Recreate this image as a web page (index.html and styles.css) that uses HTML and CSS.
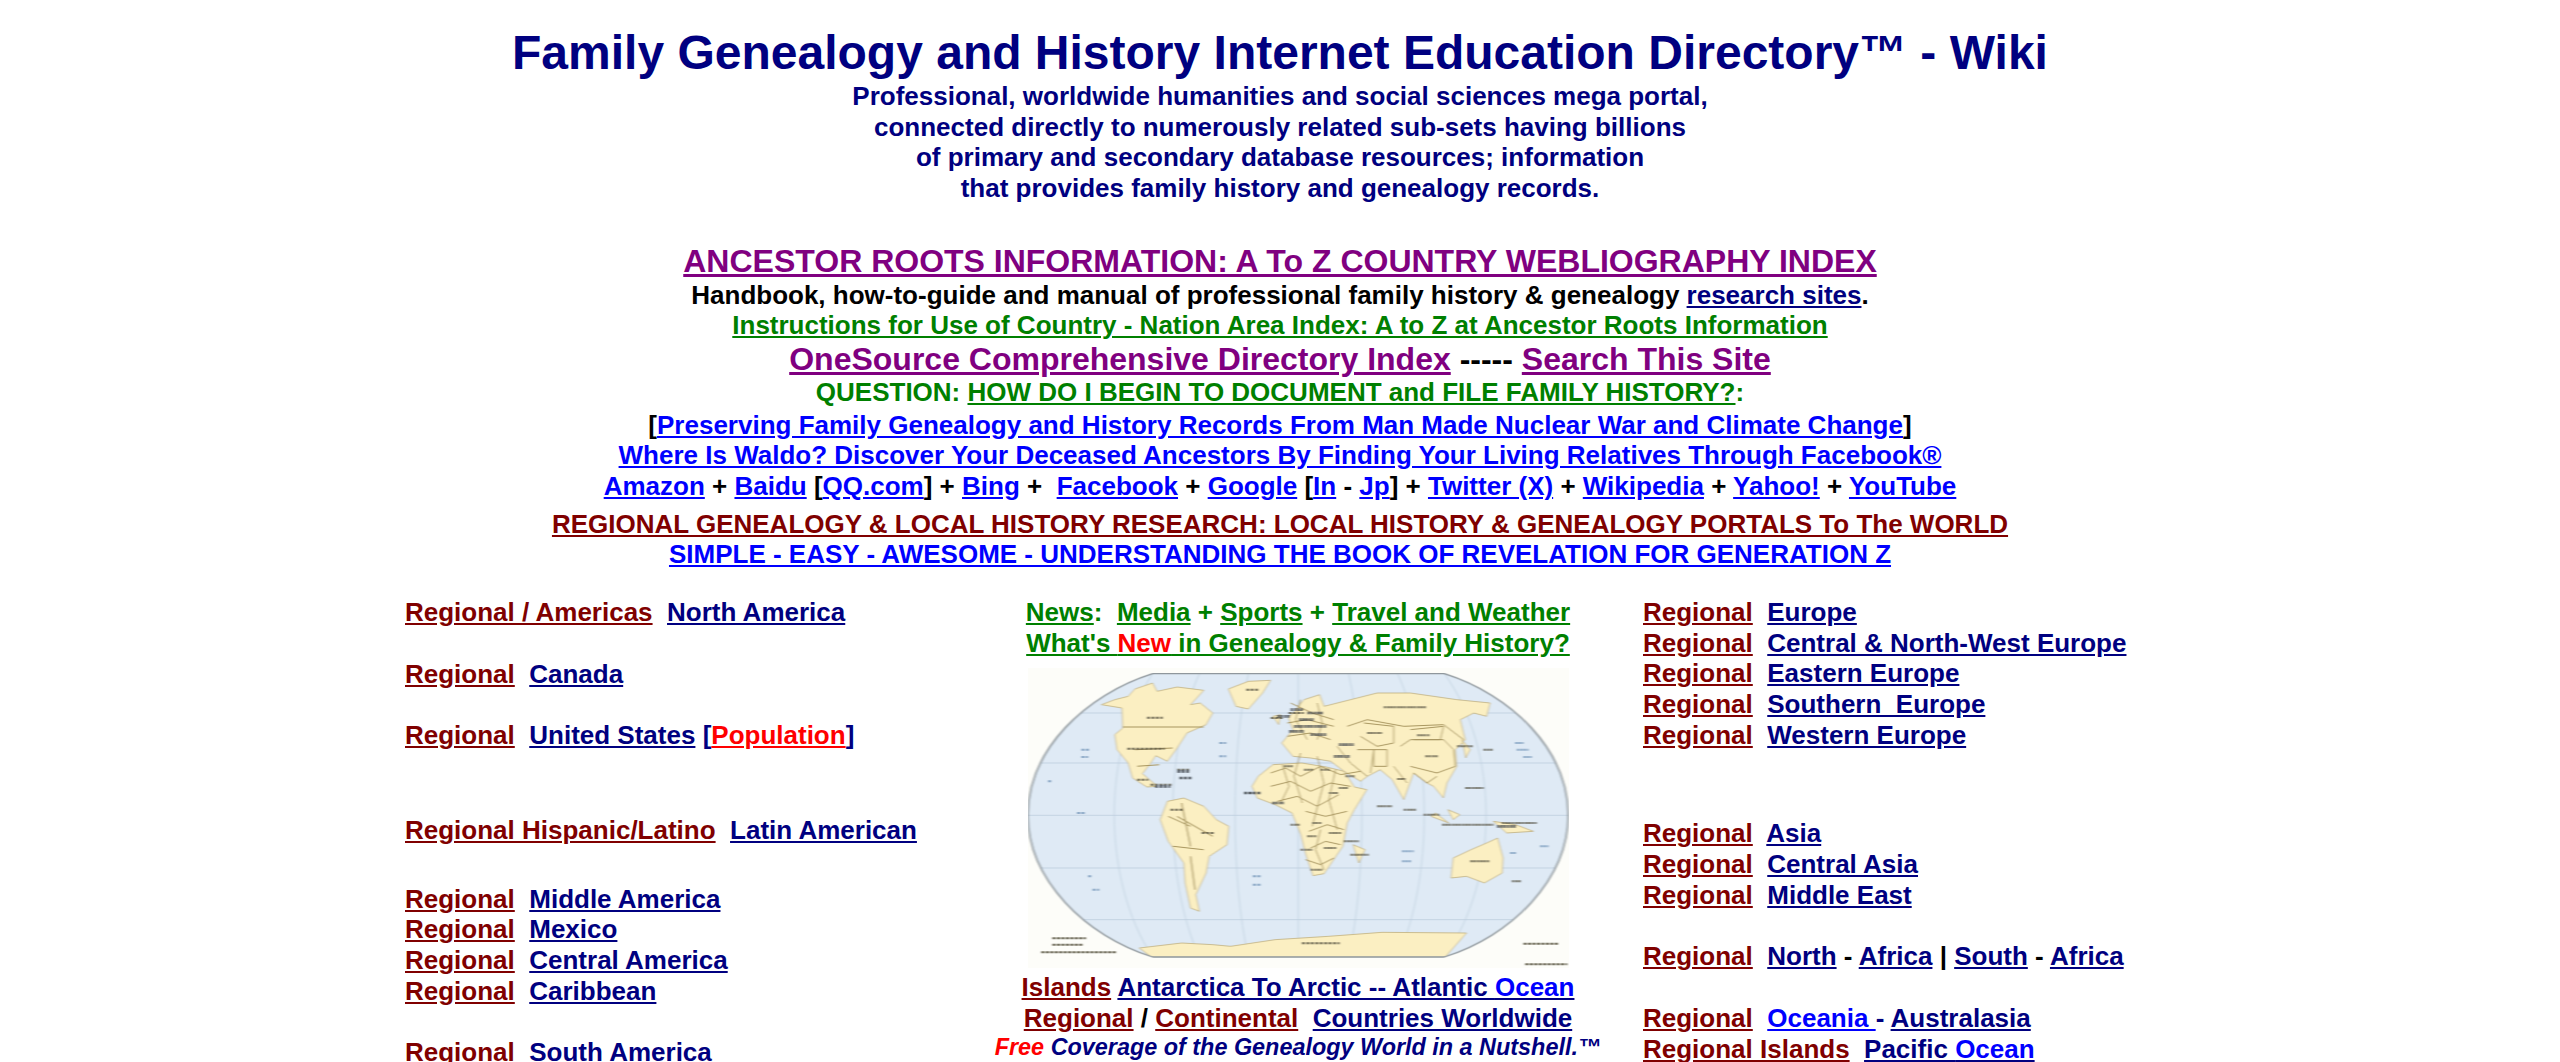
FILE: index.html
```html
<!DOCTYPE html>
<html lang="en">
<head>
  <meta charset="UTF-8">
  <title>Family Genealogy and History Internet Education Directory</title>
  <link rel="stylesheet" href="styles.css">
</head>
<body>
  <header class="intro">
    <h1>Family Genealogy and History Internet Education Directory&trade; - Wiki</h1>
    <p class="navy">Professional, worldwide humanities and social sciences mega portal,<br>
      connected directly to numerously related sub-sets having billions<br>
      of primary and secondary database resources; information<br>
      that provides family history and genealogy records.</p>
  </header>

  <section class="links">
    <h2><a class="purple" href="#">ANCESTOR ROOTS INFORMATION: A To Z COUNTRY WEBLIOGRAPHY INDEX</a></h2>
    <p>Handbook, how-to-guide and manual of professional family history &amp; genealogy <a class="navy" href="#">research sites</a>.</p>
    <p><a class="green" href="#">Instructions for Use of Country - Nation Area Index: A to Z at Ancestor Roots Information</a></p>
    <p class="big"><a class="purple" href="#">OneSource Comprehensive Directory Index</a> ----- <a class="purple" href="#">Search This Site</a></p>
    <p class="green question">QUESTION: <a class="green" href="#">HOW DO I BEGIN TO DOCUMENT and FILE FAMILY HISTORY?</a>:</p>
    <p>[<a class="blue" href="#">Preserving Family Genealogy and History Records From Man Made Nuclear War and Climate Change</a>]</p>
    <p><a class="blue" href="#">Where Is Waldo? Discover Your Deceased Ancestors By Finding Your Living Relatives Through Facebook&reg;</a></p>
    <p><a class="blue" href="#">Amazon</a> + <a class="blue" href="#">Baidu</a> [<a class="blue" href="#">QQ.com</a>] + <a class="blue" href="#">Bing</a> +&nbsp; <a class="blue" href="#">Facebook</a> + <a class="blue" href="#">Google</a> [<a class="blue" href="#">In</a> - <a class="blue" href="#">Jp</a>] + <a class="blue" href="#">Twitter (X)</a> + <a class="blue" href="#">Wikipedia</a> + <a class="blue" href="#">Yahoo!</a> + <a class="blue" href="#">YouTube</a></p>
    <p class="spaced"><a class="maroon" href="#">REGIONAL GENEALOGY &amp; LOCAL HISTORY RESEARCH: LOCAL HISTORY &amp; GENEALOGY PORTALS To The WORLD</a></p>
    <p><a class="blue" href="#">SIMPLE - EASY - AWESOME - UNDERSTANDING THE BOOK OF REVELATION FOR GENERATION Z</a></p>
  </section>

  <main class="regions">
    <div class="col">
      <div class="group"><a class="maroon" href="#">Regional / Americas</a>&nbsp; <a class="navy" href="#">North America</a></div>
      <div class="group"><a class="maroon" href="#">Regional</a>&nbsp; <a class="navy" href="#">Canada</a></div>
      <div class="group"><a class="maroon" href="#">Regional</a>&nbsp; <a class="navy" href="#">United States</a> <span class="navy">[</span><a class="red" href="#">Population</a><span class="navy">]</span></div>
      <div class="group wide"><a class="maroon" href="#">Regional Hispanic/Latino</a>&nbsp; <a class="navy" href="#">Latin American</a></div>
      <div class="group mid">
        <a class="maroon" href="#">Regional</a>&nbsp; <a class="navy" href="#">Middle America</a><br>
        <a class="maroon" href="#">Regional</a>&nbsp; <a class="navy" href="#">Mexico</a><br>
        <a class="maroon" href="#">Regional</a>&nbsp; <a class="navy" href="#">Central America</a><br>
        <a class="maroon" href="#">Regional</a>&nbsp; <a class="navy" href="#">Caribbean</a>
      </div>
      <div class="group"><a class="maroon" href="#">Regional</a>&nbsp; <a class="navy" href="#">South America</a></div>
    </div>

    <div class="col center">
      <div class="green"><a class="green" href="#">News</a>:&nbsp; <a class="green" href="#">Media</a> + <a class="green" href="#">Sports</a> + <a class="green" href="#">Travel and Weather</a></div>
      <div><a class="green" href="#">What's <span class="red">New</span> in Genealogy &amp; Family History?</a></div>

      <svg class="map" viewBox="105 55 1215 900" preserveAspectRatio="none" aria-label="World map">
        <defs>
          <filter id="soft"><feGaussianBlur stdDeviation="2.8 1.8"/></filter>
          <clipPath id="globe"><path d="M385 72L1040 72C1190 135 1318 300 1318 497C1318 690 1190 860 1040 922L385 922C235 860 105 690 105 497C105 300 235 135 385 72Z"/></clipPath>
        </defs>
        <rect x="105" y="55" width="1215" height="900" fill="#fdfdf9"/>
        <g filter="url(#soft)">
          <path d="M385 72L1040 72C1190 135 1318 300 1318 497C1318 690 1190 860 1040 922L385 922C235 860 105 690 105 497C105 300 235 135 385 72Z" fill="#dfeaf5"/>
          <g clip-path="url(#globe)">
            <g class="grid-lines">
              <path d="M105 340H1318M105 497H1318M105 655H1318M105 810H1318M105 190H1318"/>
              <path d="M712 72V922M600 72C560 300 560 690 600 922M825 72C865 300 865 690 825 922M490 72C410 300 410 690 490 922M935 72C1015 300 1015 690 935 922M385 72C270 300 270 690 385 922M1040 72C1165 300 1165 690 1040 922"/>
            </g>
            <g class="land">
              <!-- north america -->
              <path d="M270 165L300 150L330 140L345 118L385 100L395 125L440 112L500 122L470 165L492 160L520 190L505 225L462 250L440 295L418 335L392 318L378 345L362 372L396 410L372 412L340 385L330 340L305 300L300 255L318 235L316 175Z"/>
              <!-- greenland -->
              <path d="M555 118L600 95L650 92L632 130L600 178L572 170Z"/>
              <!-- south america -->
              <path d="M418 455L455 445L500 470L528 510L556 530L552 585L512 620L505 670L482 735L490 785L470 775L458 700L455 640L420 575L402 510Z"/>
              <!-- africa -->
              <path d="M622 380L655 345L720 340L775 352L815 365L838 412L866 420L838 480L822 520L812 590L770 672L745 678L728 610L718 555L698 490L660 465L620 445L608 410Z"/>
              <!-- eurasia -->
              <path d="M690 205L725 150L760 135L770 170L889 130L964 130L1068 150L1143 160L1135 200L1106 190L1076 210L1087 270L1065 300L1068 350L1046 400L1038 445L1016 410L1001 400L971 370L949 450L923 390L896 360L867 380L852 395L815 365L785 335L740 325L700 320L675 280L700 240Z"/>
              <!-- islands and smaller land -->
              <path d="M1048 480L1075 495L1060 510ZM1150 515L1200 525L1240 545L1180 550ZM1080 270L1098 300L1088 325ZM655 200L672 195L668 225ZM835 585L862 600L848 640ZM1020 490L1050 520L1010 500Z"/>
              <!-- australia -->
              <path d="M1060 625L1100 600L1135 580L1160 565L1172 625L1170 670L1130 700L1090 680L1055 685Z"/>
              <!-- antarctica -->
              <path d="M355 895L450 880L520 885L560 890L660 870L780 860L900 848L1090 850L1040 925L385 925Z"/>
            </g>
            <g class="borders">
              <path d="M318 232H500M345 300L430 295M350 350L400 345M440 500L520 560M430 590L500 600M470 620L480 720M420 500L470 530M450 460L470 590"/>
              <!-- these are drawn in the coordinates of the eastern half -->
              <g transform="translate(650 60) scale(.747 1)">
                <path d="M230 170L290 150L400 170L520 165L580 210M280 160L370 170L370 220L320 230L270 200M420 180L520 170L510 210L430 210M390 230L420 210L520 210L550 240L555 290L500 310L420 290M310 240L350 240L350 290L310 290ZM260 240L310 240L300 310M370 290L410 340M430 310L470 340L500 320"/>
                <path d="M0 310L45 295L90 320L150 290L210 315L270 305M0 350L60 335L120 365L180 340L240 350M20 395L80 380L140 410L205 375M90 250L70 320L95 400M140 260L160 340L125 470M195 300L175 390L200 480M35 285L55 350L30 400M105 425L165 440L230 425M115 485L170 465L220 480M120 535L165 515L210 525M105 570L150 585L190 565M150 480L135 540L160 600M60 100L125 130L190 150M50 160L110 150L190 170M90 90L75 150L110 210M140 100L155 160L140 210M50 200L120 190L180 210M200 230L240 280L290 320"/>
              </g>
            </g>
            <g class="marks" transform="translate(650 60) scale(.747 1)">
              <path d="M340 113H470M290 190H335M440 197H480M465 260H505M380 328H405M600 575H660M515 465H670M40 290H70M100 300H130M150 300H180M225 320H255M175 370H205M205 355H235M125 460H155M60 465H90M110 500H140M175 490H215M220 515H265M90 540H125M160 535H200M240 555H295M120 600H155M320 410H365M400 420H440M460 435H510M560 230H610M640 240H670M585 355H640M695 460H800M725 635H755"/>
              <path class="dark" d="M20 140H60M60 120H100M55 185H100M110 130H160M70 170H170M120 195H170M85 150H130M190 260H240M205 225H250M5 400H40M680 470H740"/>
              <path class="faint" d="M735 220H760M740 240H775M760 262H785M395 545H430M395 575H425M720 550H740M810 530H835"/>
            </g>
            <g class="marks">
              <path d="M372 204H408M328 297H412M495 550H522M720 881H805M590 430H625M380 405H430M440 360H470M425 480H455M350 390H375M650 205H680M690 190H725M595 120H625"/>
              <path class="dark" d="M440 365H470M445 385H475M390 410H425M590 430H630"/>
              <path class="faint" d="M225 300H245M225 322H240M535 280H550M535 320H550M610 680H630M610 705H630M240 680H250M250 720H265M150 395H160M215 490H235"/>
            </g>
          </g>
          <path class="edge" d="M385 72L1040 72C1190 135 1318 300 1318 497C1318 690 1190 860 1040 922L385 922C235 860 105 690 105 497C105 300 235 135 385 72Z"/>
          <path class="marks" d="M160 866H235M160 885H230M135 908H305M1218 882H1295M1222 944H1316"/>
        </g>
      </svg>

      <div><a class="maroon" href="#">Islands</a> <a class="navy" href="#">Antarctica To Arctic -- Atlantic <span class="blue">Ocean</span></a></div>
      <div><a class="maroon" href="#">Regional</a> / <a class="maroon" href="#">Continental</a>&nbsp; <a class="navy" href="#">Countries Worldwide</a></div>
      <div class="nutshell navy"><span class="red">Free</span> Coverage of the Genealogy World in a Nutshell.&trade;</div>
    </div>

    <div class="col">
      <div class="group">
        <a class="maroon" href="#">Regional</a>&nbsp; <a class="navy" href="#">Europe</a><br>
        <a class="maroon" href="#">Regional</a>&nbsp; <a class="navy" href="#">Central &amp; North-West Europe</a><br>
        <a class="maroon" href="#">Regional</a>&nbsp; <a class="navy" href="#">Eastern Europe</a><br>
        <a class="maroon" href="#">Regional</a>&nbsp; <a class="navy" href="#">Southern&nbsp; Europe</a><br>
        <a class="maroon" href="#">Regional</a>&nbsp; <a class="navy" href="#">Western Europe</a>
      </div>
      <div class="group far">
        <a class="maroon" href="#">Regional</a>&nbsp; <a class="navy" href="#">Asia</a><br>
        <a class="maroon" href="#">Regional</a>&nbsp; <a class="navy" href="#">Central Asia</a><br>
        <a class="maroon" href="#">Regional</a>&nbsp; <a class="navy" href="#">Middle East</a>
      </div>
      <div class="group"><a class="maroon" href="#">Regional</a>&nbsp; <a class="navy" href="#">North</a> - <a class="navy" href="#">Africa</a> | <a class="navy" href="#">South</a> - <a class="navy" href="#">Africa</a></div>
      <div class="group">
        <a class="maroon" href="#">Regional</a>&nbsp; <a class="blue" href="#">Oceania </a><span class="navy">- </span><a class="navy" href="#">Australasia</a><br>
        <a class="maroon" href="#">Regional Islands</a>&nbsp; <a class="navy" href="#">Pacific <span class="blue">Ocean</span></a>
      </div>
    </div>
  </main>
</body>
</html>
```

FILE: styles.css
```css
html, body {
  height: 100%;
  overflow: hidden;
}
body {
  margin: 0;
  font-family: "Liberation Sans", Arial, sans-serif;
  font-weight: bold;
  font-size: 26px;
  line-height: 30.67px;
  color: #000;
  background: #fff;
}
p {
  margin: 0;
}
a {
  text-decoration: underline;
}
.navy { color: #000080; }
.blue { color: #0000ff; }
.green { color: #008000; }
.purple { color: #800080; }
.maroon { color: #800000; }
.red { color: #ff0000; }

.intro {
  text-align: center;
  padding-top: 24px;
}
h1 {
  margin: 0;
  font-size: 48px;
  line-height: 57px;
  color: #000080;
}
.links {
  text-align: center;
  margin-top: 39px;
}
h2 {
  margin: 0 0 1px;
  font-size: 32px;
  line-height: 36px;
}
.big {
  font-size: 32px;
  line-height: 36px;
}
.question {
  margin-bottom: 2px;
}
.spaced {
  margin-top: 7px;
}
.regions {
  display: grid;
  grid-template-columns: 548px 616px 1fr;
  column-gap: 37px;
  margin: 27px 0 0 405px;
}
.center {
  text-align: center;
}
.group {
  margin-bottom: 31px;
}
.group.wide {
  margin-top: 64px;
  margin-bottom: 38px;
}
.group.far {
  margin-top: 68px;
}
.map {
  display: block;
  width: 541px;
  height: 300px;
  margin: 10px auto 4px;
}
.nutshell {
  font-size: 23.4px;
  font-style: italic;
  line-height: 26px;
}
.grid-lines path {
  fill: none;
  stroke: #bccddc;
  stroke-width: 2;
}
.land path {
  fill: #fbefc2;
  stroke: #bfae7c;
  stroke-width: 2;
}
.borders path {
  fill: none;
  stroke: #a8965f;
  stroke-width: 3;
}
.marks {
  fill: none;
  stroke: #5f5b48;
  stroke-width: 6;
  stroke-dasharray: 7 3;
}
.marks .dark {
  stroke: #3f4650;
  stroke-width: 8;
}
.marks .faint {
  stroke: #7d9fc0;
}
.edge {
  fill: none;
  stroke: #8f979c;
  stroke-width: 4;
}
```
